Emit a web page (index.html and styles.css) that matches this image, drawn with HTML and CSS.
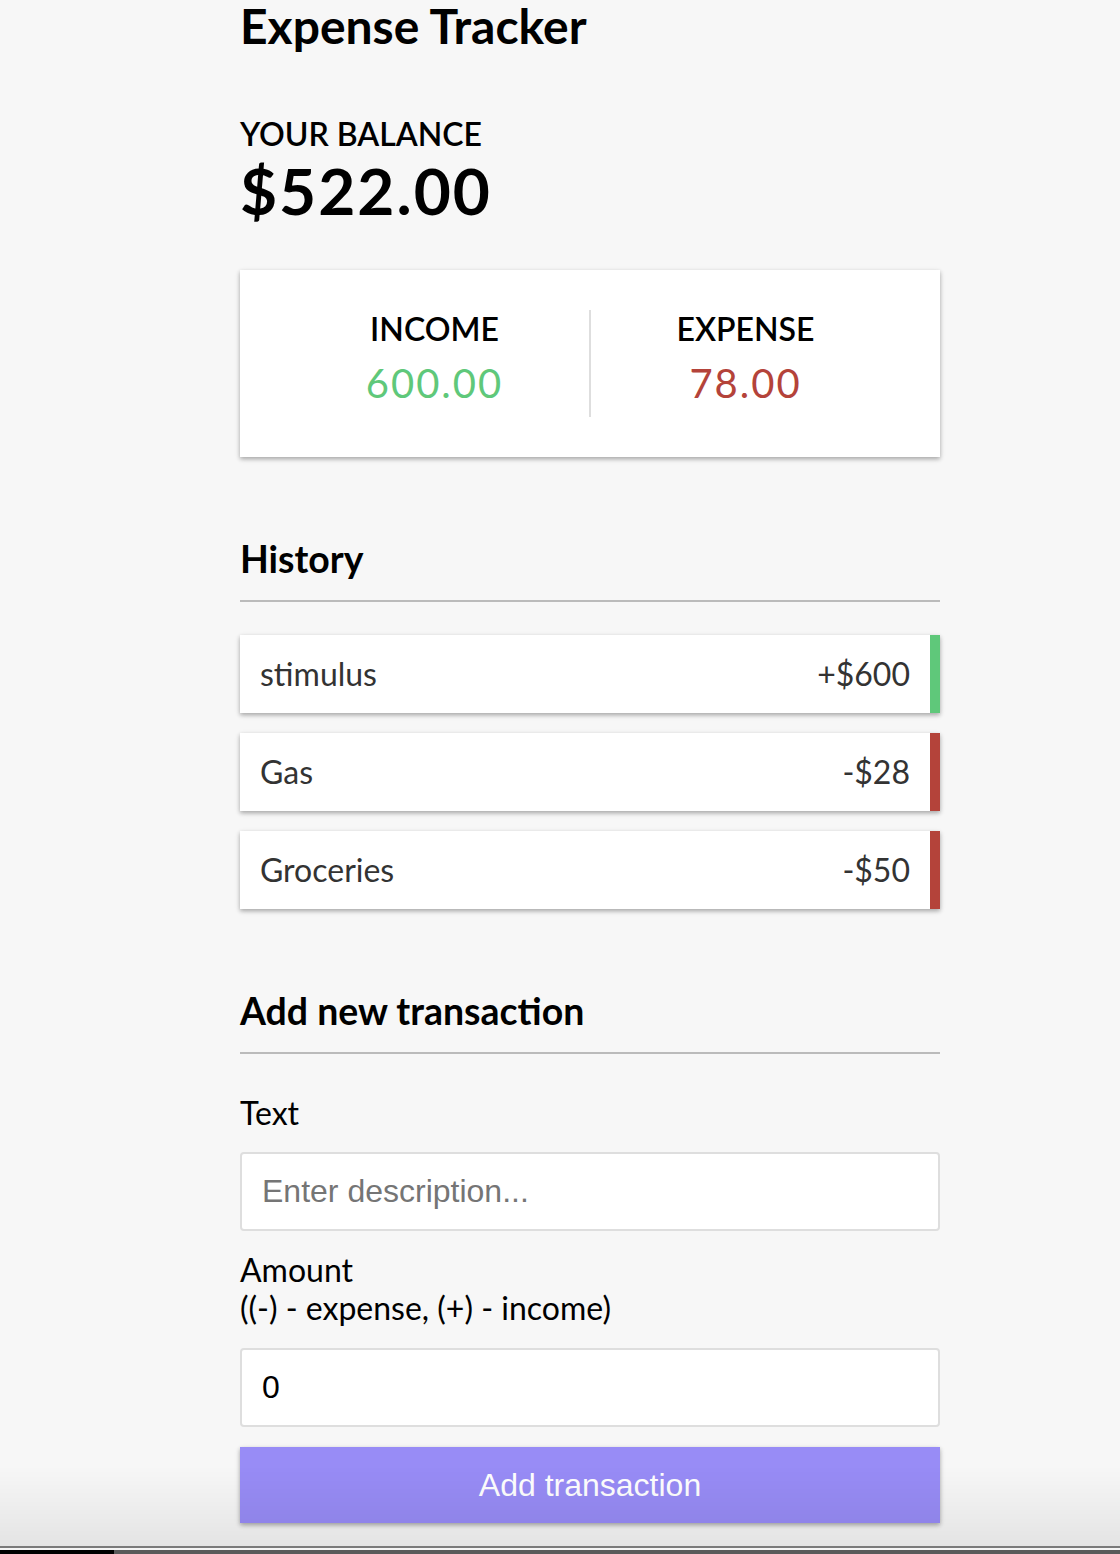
FILE: index.html
```html
<!DOCTYPE html>
<html lang="en">
<head>
<meta charset="UTF-8">
<title>Expense Tracker</title>
<link rel="stylesheet" href="styles.css">
</head>
<body>
  <div class="container">
    <h2 class="title">Expense Tracker</h2>

    <h4 class="balance-label">Your Balance</h4>
    <h1 class="balance">$522.00</h1>

    <div class="inc-exp-container">
      <div class="inc-exp">
        <h4>Income</h4>
        <p class="money plus">600.00</p>
      </div>
      <div class="inc-exp">
        <h4>Expense</h4>
        <p class="money minus">78.00</p>
      </div>
    </div>

    <h3 class="section-title">History</h3>
    <ul class="list">
      <li class="item plus">stimulus <span>+$600</span></li>
      <li class="item minus">Gas <span>-$28</span></li>
      <li class="item minus">Groceries <span>-$50</span></li>
    </ul>

    <h3 class="section-title">Add new transaction</h3>
    <form class="form">
      <div class="form-control">
        <label class="label" for="text">Text</label>
        <input class="field" type="text" id="text" placeholder="Enter description...">
      </div>
      <div class="form-control">
        <label class="label" for="amount">Amount <br>((-) - expense, (+) - income)</label>
        <input class="field" type="number" id="amount" value="0">
      </div>
      <button class="btn" type="button">Add transaction</button>
    </form>
  </div>

  <div class="screen-edge">
    <div class="edge-fade"></div>
    <div class="edge-line"></div>
    <div class="edge-gap"></div>
    <div class="edge-bar"></div>
  </div>
</body>
</html>
```

FILE: styles.css
```css
* {
  box-sizing: border-box;
}

body {
  margin: 0;
  background-color: #f7f7f7;
  font-family: Lato, "Noto Sans", sans-serif;
  font-size: 32px;
  color: #000;
}

.container {
  width: 700px;
  margin: 0 0 60px 240px;
}

.title {
  font-size: 48px;
  font-weight: 700;
  line-height: 48px;
  margin: 2px 0 65px;
}

h4 {
  margin: 0;
  text-transform: uppercase;
  font-size: 32px;
  font-weight: 700;
  line-height: 38.4px;
}

.balance-label {
  font-weight: 600;
}

.balance {
  margin: 0;
  font-size: 64px;
  line-height: 76.8px;
  font-weight: 700;
  letter-spacing: 2px;
}

.inc-exp-container {
  background-color: #fff;
  box-shadow: 0 2px 6px rgba(0, 0, 0, 0.12), 0 2px 4px rgba(0, 0, 0, 0.24);
  padding: 40px;
  display: flex;
  justify-content: space-between;
  margin: 40px 0;
}

.inc-exp {
  flex: 1;
  text-align: center;
}

.inc-exp h4 {
  font-weight: 600;
}

.inc-exp:first-of-type {
  border-right: 2px solid #dedede;
}

.money {
  font-size: 40px;
  line-height: 48px;
  letter-spacing: 2px;
  margin: 10px 0;
}

.money.plus {
  color: #5fc87a;
}

.money.minus {
  color: #b4433a;
}

.section-title {
  font-size: 37.44px;
  line-height: 43px;
  font-weight: 700;
  border-bottom: 2px solid #bbb;
  padding-bottom: 20px;
  margin: 80px 0 20px;
}

.list {
  list-style-type: none;
  padding: 0;
  margin: 33px 0 80px;
}

.item {
  background-color: #fff;
  box-shadow: 0 2px 6px rgba(0, 0, 0, 0.12), 0 2px 4px rgba(0, 0, 0, 0.24);
  color: #333;
  display: flex;
  justify-content: space-between;
  padding: 20px;
  margin: 20px 0;
  line-height: 38px;
}

.item.plus {
  border-right: 10px solid #5fc87a;
}

.item.minus {
  border-right: 10px solid #b4433a;
}

.form-control {
  display: flex;
  flex-direction: column;
  align-items: flex-start;
}

.label {
  margin: 20px 0;
  line-height: 38.4px;
}

.field {
  display: block;
  width: 100%;
  border: 2px solid #dedede;
  border-radius: 4px;
  background: #fff;
  font-family: "Liberation Sans", Arial, sans-serif;
  font-size: 32px;
  line-height: 35px;
  height: 79px;
  padding: 20px;
  color: #000;
  margin: 0;
}

.field::placeholder {
  color: #757575;
}

.btn {
  display: block;
  width: 100%;
  border: 0;
  background-color: #988cf6;
  box-shadow: 0 2px 6px rgba(0, 0, 0, 0.12), 0 2px 4px rgba(0, 0, 0, 0.24);
  color: #fff;
  font-family: "Liberation Sans", Arial, sans-serif;
  font-size: 32px;
  line-height: 36px;
  padding: 20px;
  margin: 20px 0 60px;
  cursor: pointer;
}

.screen-edge {
  position: fixed;
  left: 0;
  right: 0;
  bottom: 0;
  height: 88px;
  display: flex;
  flex-direction: column;
  pointer-events: none;
}

.edge-fade {
  flex: 1;
  background: linear-gradient(to bottom, rgba(0, 0, 0, 0), rgba(0, 0, 0, 0.075));
}

.edge-line {
  height: 2px;
  background: #7a7a7a;
}

.edge-gap {
  height: 2px;
  background: #f4f4f4;
}

.edge-bar {
  height: 4px;
  background: linear-gradient(to right, #000 0, #000 114px, #5a5a5a 114px, #5a5a5a 100%);
}
```
